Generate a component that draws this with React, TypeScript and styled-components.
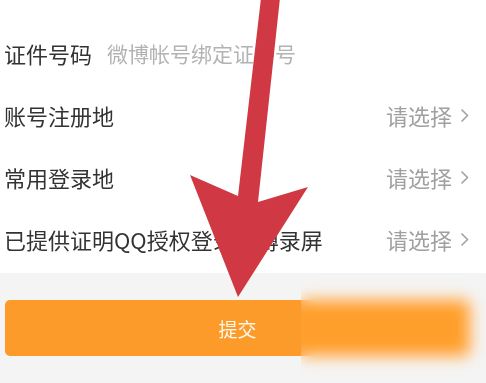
import styled, { createGlobalStyle } from "styled-components";

const GlobalStyle = createGlobalStyle`
    body {
        margin: 0;
        font-family: "Noto Sans CJK SC", "Noto Sans", sans-serif;
        background: #ffffff;
    }
`

interface TRow {
    label: string,
    placeholder?: string,
    select?: boolean
}

const rows: TRow[] = [
    {label: "证件号码", placeholder: "微博帐号绑定证件号"},
    {label: "账号注册地", select: true},
    {label: "常用登录地", select: true},
    {label: "已提供证明QQ授权登录微博录屏", select: true},
]

export default function App() {
    return(
        <Page>
            <GlobalStyle/>
            <List>
                {rows.map((row) => (
                    <Row key={row.label}>
                        <Left>
                            <Label>{row.label}</Label>
                            {row.placeholder && <Placeholder>{row.placeholder}</Placeholder>}
                        </Left>
                        {row.select && (
                            <Select>
                                请选择
                                <svg width="9" height="15" viewBox="0 0 9 15">
                                    <polyline points="1.5,1.5 7.5,7.5 1.5,13.5" fill="none" stroke="#a0a0a0" strokeWidth="1.5"/>
                                </svg>
                            </Select>
                        )}
                    </Row>
                ))}
            </List>
            <Footer>
                <SubmitButton>提交</SubmitButton>
            </Footer>
            <Arrow width="486" height="383" viewBox="0 0 486 383">
                <polygon
                    points="261,-2 280,-2 258,202 308,187 238,297 190,175 238,196"
                    fill="#d03944"
                />
            </Arrow>
            <BlurPatch/>
        </Page>
    );
}

const Page = styled.div`
    position: relative;
    width: 486px;
    height: 383px;
    overflow: hidden;
    background: #ffffff;
`

const List = styled.div`
    padding-top: 22px;
`

const Row = styled.div`
    display: flex;
    align-items: center;
    justify-content: space-between;
    height: 62px;
    padding: 0 17px 0 4px;
`

const Left = styled.div`
    display: flex;
    align-items: center;
    gap: 15px;
`

const Label = styled.span`
    font-size: 22px;
    color: #333333;
`

const Placeholder = styled.span`
    font-size: 21px;
    color: #b3b3b3;
`

const Select = styled.span`
    display: flex;
    align-items: center;
    gap: 8px;
    font-size: 22px;
    color: #a0a0a0;
`

const Footer = styled.div`
    margin-top: 3px;
    height: 110px;
    padding: 27px 16px 0 5px;
    background: #f4f4f4;
`

const SubmitButton = styled.button`
    display: flex;
    align-items: center;
    justify-content: center;
    width: 100%;
    height: 56px;
    border: none;
    border-radius: 5px;
    background: #fc9a2a;
    color: #fff8ec;
    font-family: "Noto Sans CJK SC", sans-serif;
    font-size: 19px;
`

const Arrow = styled.svg`
    position: absolute;
    left: 0;
    top: 0;
    filter: blur(0.6px);
    pointer-events: none;
`

const BlurPatch = styled.div`
    position: absolute;
    left: 301px;
    top: 273px;
    right: 0;
    bottom: 0;
    background: rgba(255, 255, 255, 0.06);
    backdrop-filter: blur(8px) saturate(1.1);
`
